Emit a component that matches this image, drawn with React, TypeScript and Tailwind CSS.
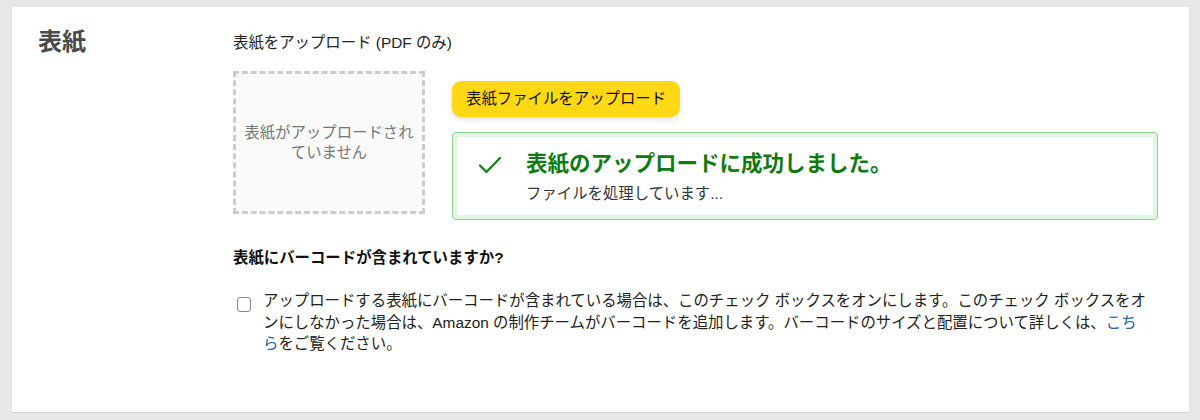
import React from "react";

const FONT = { fontFamily: '"Liberation Sans", "Noto Sans CJK JP", sans-serif' };

export default function App() {
  return (
    <div className="w-[1200px] h-[420px] bg-[#e7e7e7] pt-[7px] pl-[12px] pr-[11px]" style={FONT}>
      <div className="h-[406px] bg-white border-b border-[#d5d5d5] flex">
        <div className="w-[221px] shrink-0 pl-[26px] pt-[19px]">
          <h2 className="text-[24px] leading-[32px] text-[#4a4a4a] font-semibold">表紙</h2>
        </div>
        <div className="flex-1 pr-[34px] pt-[25px]">
          <div className="text-[15.4px] leading-[22px] text-[#222]">表紙をアップロード (PDF のみ)</div>
          <div className="mt-[17px] flex">
            <div className="w-[192px] h-[143px] shrink-0 border-[3px] border-dashed border-[#cccccc] bg-[#fafafa] flex items-center justify-center px-[6px]">
              <p className="text-[15.4px] leading-[20px] text-[#767676] text-center">表紙がアップロードされていません</p>
            </div>
            <div className="ml-[27px] flex-1 pt-[10px]">
              <button className="h-[36px] px-[14px] rounded-[9px] bg-[#FFD814] text-[15.4px] text-[#0f1111] shadow-[0_2px_5px_rgba(180,185,185,0.5)]">
                表紙ファイルをアップロード
              </button>
              <div className="mt-[15px] mr-[-3px] h-[88px] rounded-[4px] border border-[#8fd48f] p-[4px] bg-[#e3f6e3]">
                <div className="h-full bg-white flex items-start pt-[12px] pl-[21px]">
                  <svg width="24" height="20" viewBox="0 0 24 20" className="mt-[6px]" fill="none">
                    <path d="M2 10.5 L8.5 17 L22 3" stroke="#128012" strokeWidth="2.2" strokeLinecap="round" strokeLinejoin="round" />
                  </svg>
                  <div className="ml-[24px]">
                    <div className="text-[21.5px] leading-[30px] font-bold text-[#0f7b0f]">表紙のアップロードに成功しました。</div>
                    <div className="text-[15.4px] leading-[22px] text-[#333] mt-[4px]">ファイルを処理しています...</div>
                  </div>
                </div>
              </div>
            </div>
          </div>
          <div className="mt-[27px] text-[15.4px] leading-[22px] font-bold text-[#111]">表紙にバーコードが含まれていますか?</div>
          <div className="mt-[21px] flex items-start">
            <span className="mt-[7px] ml-[4px] w-[14px] h-[15px] shrink-0 rounded-[3px] border border-[#888] bg-white" />
            <p className="ml-[12px] mr-[7px] text-[15.4px] leading-[21.5px] text-[#222]">
              アップロードする表紙にバーコードが含まれている場合は、このチェック ボックスをオンにします。このチェック ボックスをオンにしなかった場合は、Amazon の制作チームがバーコードを追加します。バーコードのサイズと配置について詳しくは、
              <a className="text-[#2162a1]">こちら</a>をご覧ください。
            </p>
          </div>
        </div>
      </div>
    </div>
  );
}
